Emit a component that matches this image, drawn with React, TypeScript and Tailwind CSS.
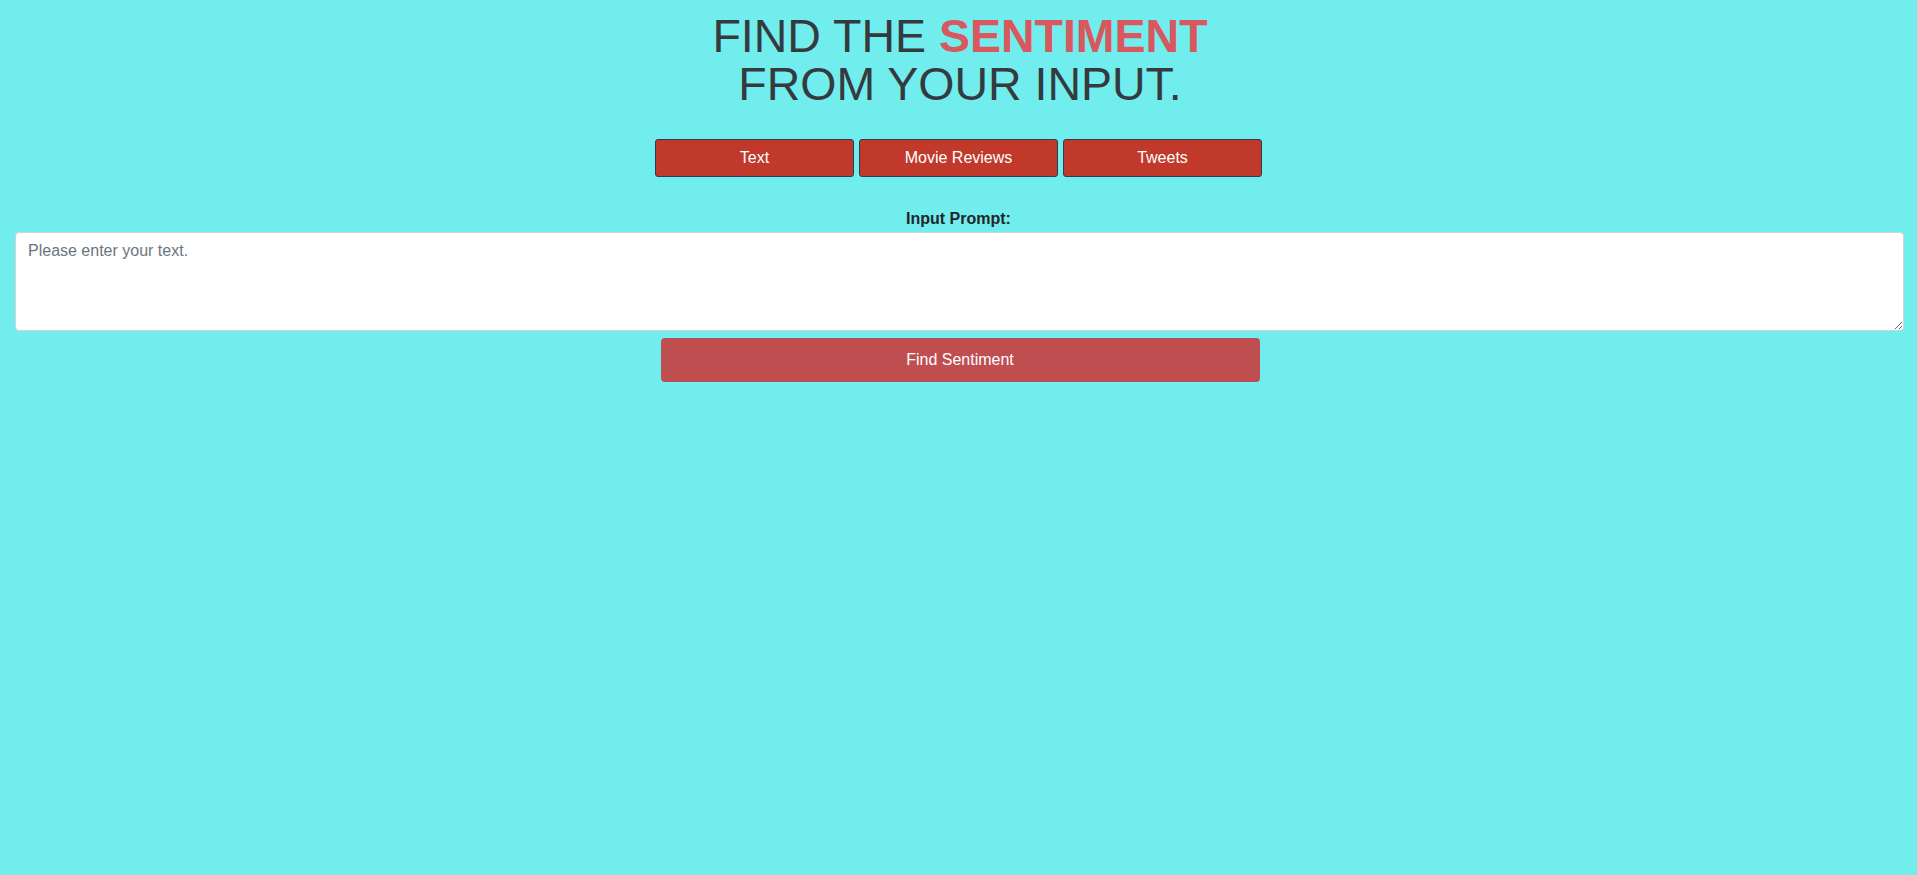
export default function App() {
  const tabs = ["Text", "Movie Reviews", "Tweets"];

  return (
    <div className="min-h-[875px] bg-[#71eded] font-['Liberation_Sans',Arial,sans-serif]">
      {/* Title */}
      <h1 className="pt-[12px] pl-[3px] text-center text-[46.5px] leading-[48px] text-[#343a40]">
        FIND THE <span className="font-bold text-[#d9575e]">SENTIMENT</span>
        <br />
        FROM YOUR INPUT.
      </h1>

      {/* Source tabs */}
      <div className="mt-[31px] flex justify-center gap-[5px]">
        {tabs.map((tab) => (
          <button
            key={tab}
            className="h-[38px] w-[199px] rounded-[3px] border border-[#2c3e50] bg-[#c0392b] text-[16px] text-white"
          >
            {tab}
          </button>
        ))}
      </div>

      {/* Input */}
      <div className="mt-[33px] flex flex-col items-center">
        <label className="text-[16px] font-bold leading-[18px] text-[#212529]">Input Prompt:</label>
        <textarea
          placeholder="Please enter your text."
          className="mt-[4px] ml-[2px] h-[99px] w-[1889px] rounded-[4px] border border-[#ced4da] bg-white px-[12px] py-[6px] text-[16px] text-[#495057] placeholder:text-[#6c757d] outline-none"
        />
        <button className="mt-[7px] ml-[3px] h-[44px] w-[599px] rounded-[4px] bg-[#bf4e51] text-[16px] text-white">
          Find Sentiment
        </button>
      </div>
    </div>
  );
}
